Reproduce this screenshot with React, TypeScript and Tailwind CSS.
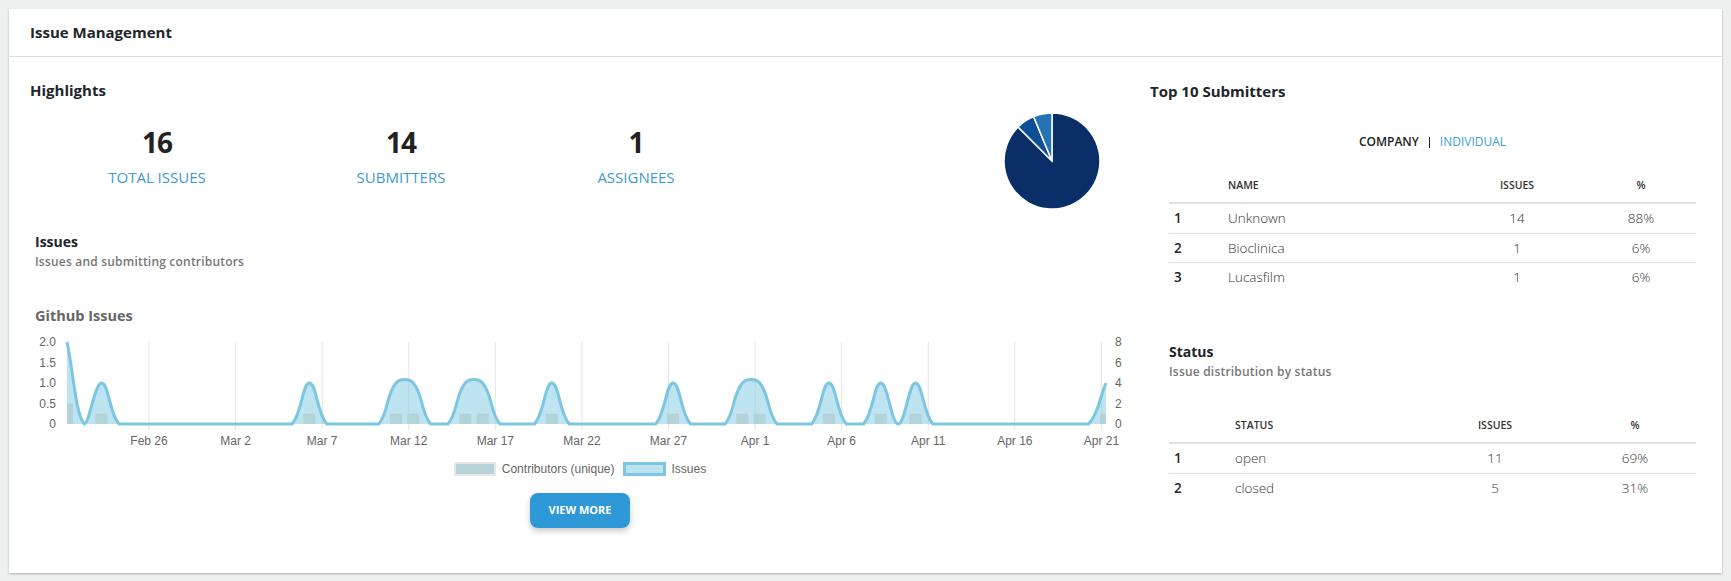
import React from 'react';

type Pt = { x: number; y: number };

const X0 = 67;
const X1 = 1106;
const BASE = 424;
const TOP = 342;
const STEP = (X1 - X0) / 60;

// issues per day (day 0 = first point of the range)
const issuesByDay: Record<number, number> = {
  0: 2, 2: 1, 14: 1, 19: 1, 20: 1, 23: 1, 24: 1, 28: 1, 35: 1, 39: 1, 40: 1, 44: 1, 47: 1, 49: 1, 60: 1,
};
const contributorsByDay: Record<number, number> = {
  0: 2, 2: 1, 14: 1, 19: 1, 20: 1, 23: 1, 24: 1, 28: 1, 35: 1, 39: 1, 40: 1, 44: 1, 47: 1, 49: 1, 60: 1,
};

const xTicks = ['Feb 26', 'Mar 2', 'Mar 7', 'Mar 12', 'Mar 17', 'Mar 22', 'Mar 27', 'Apr 1', 'Apr 6', 'Apr 11', 'Apr 16', 'Apr 21'];

const clamp = (v: number, lo: number, hi: number) => Math.min(hi, Math.max(lo, v));

// same maths as chart.js splineCurve, tension 0.4, capped to the chart area
function controlPoints(prev: Pt, cur: Pt, next: Pt, t = 0.4) {
  const d01 = Math.hypot(cur.x - prev.x, cur.y - prev.y);
  const d12 = Math.hypot(next.x - cur.x, next.y - cur.y);
  const sum = d01 + d12 || 1;
  const fa = t * (d01 / sum);
  const fb = t * (d12 / sum);
  const p = { x: cur.x - fa * (next.x - prev.x), y: cur.y - fa * (next.y - prev.y) };
  const n = { x: cur.x + fb * (next.x - prev.x), y: cur.y + fb * (next.y - prev.y) };
  return {
    p: { x: clamp(p.x, X0, X1), y: clamp(p.y, TOP, BASE) },
    n: { x: clamp(n.x, X0, X1), y: clamp(n.y, TOP, BASE) },
  };
}

function IssuesChart() {
  const pts: Pt[] = Array.from({ length: 61 }, (_, i) => ({
    x: X0 + i * STEP,
    y: BASE - (issuesByDay[i] ?? 0) * 41,
  }));
  const cps = pts.map((pt, i) => controlPoints(pts[i - 1] ?? pt, pt, pts[i + 1] ?? pt));

  let line = `M${pts[0].x} ${pts[0].y}`;
  for (let i = 1; i < pts.length; i++) {
    const a = cps[i - 1].n;
    const b = cps[i].p;
    line += ` C${a.x.toFixed(2)} ${a.y.toFixed(2)} ${b.x.toFixed(2)} ${b.y.toFixed(2)} ${pts[i].x.toFixed(2)} ${pts[i].y}`;
  }
  const area = `${line} L${X1} ${BASE} L${X0} ${BASE} Z`;

  const tickX = (k: number) => X0 + (4.735 + 5 * k) * STEP;
  const font = "'Liberation Sans', Arial, sans-serif";

  return (
    <svg width={1090} height={122} viewBox="35 330 1090 122" className="block">
      <defs>
        <clipPath id="plot">
          <rect x={X0} y={TOP - 2} width={X1 - X0} height={BASE - TOP + 2} />
        </clipPath>
      </defs>

      {xTicks.map((label, k) => (
        <g key={label}>
          <line x1={tickX(k)} x2={tickX(k)} y1={TOP} y2={BASE + 6} stroke="#e4e4e4" strokeWidth={1} />
          <text x={tickX(k)} y={445} textAnchor="middle" fontSize={12} fill="#666" fontFamily={font}>
            {label}
          </text>
        </g>
      ))}

      {['2.0', '1.5', '1.0', '0.5', '0'].map((v, k) => (
        <text key={v} x={56} y={TOP + k * 20.5 + 4} textAnchor="end" fontSize={12} fill="#666" fontFamily={font}>
          {v}
        </text>
      ))}
      {['8', '6', '4', '2', '0'].map((v, k) => (
        <text key={v} x={1115} y={TOP + k * 20.5 + 4} fontSize={12} fill="#666" fontFamily={font}>
          {v}
        </text>
      ))}

      <g clipPath="url(#plot)">
        <path d={area} fill="rgba(126,200,227,0.5)" />
        {Object.entries(contributorsByDay).map(([day, v]) => {
          const cx = X0 + Number(day) * STEP;
          const h = v * 10.25;
          return <rect key={day} x={cx - 6} y={BASE - h} width={12} height={h} fill="#b3d0d6" opacity={0.9} />;
        })}
      </g>
      <path d={line} fill="none" stroke="#7cc6e1" strokeWidth={3} strokeLinejoin="round" />
    </svg>
  );
}

function slice(a0: number, a1: number, r = 48, c = 50) {
  const p = (a: number) => [c + r * Math.sin((a * Math.PI) / 180), c - r * Math.cos((a * Math.PI) / 180)];
  const [x0, y0] = p(a0);
  const [x1, y1] = p(a1);
  return `M${c} ${c} L${x0} ${y0} A${r} ${r} 0 ${a1 - a0 > 180 ? 1 : 0} 1 ${x1} ${y1} Z`;
}

function Pie() {
  return (
    <svg width={100} height={100} viewBox="0 0 100 100" className="block">
      <path d={slice(0, 315)} fill="#0a2f68" stroke="#fff" strokeWidth={1.5} />
      <path d={slice(315, 337.5)} fill="#0d4e95" stroke="#fff" strokeWidth={1.5} />
      <path d={slice(337.5, 360)} fill="#2572b5" stroke="#fff" strokeWidth={1.5} />
    </svg>
  );
}

const stats = [
  { value: '16', label: 'TOTAL ISSUES' },
  { value: '14', label: 'SUBMITTERS' },
  { value: '1', label: 'ASSIGNEES' },
];

const submitters = [
  { name: 'Unknown', issues: 14, pct: '88%' },
  { name: 'Bioclinica', issues: 1, pct: '6%' },
  { name: 'Lucasfilm', issues: 1, pct: '6%' },
];

const statuses = [
  { name: 'open', issues: 11, pct: '69%' },
  { name: 'closed', issues: 5, pct: '31%' },
];

export default function App() {
  return (
    <div className="min-h-screen bg-[#eff0f0] px-[9px] pt-[9px] font-['Open_Sans',sans-serif] text-[#212529]">
      <div className="bg-white shadow-[0_1px_2px_rgba(0,0,0,0.28)]">
        <div className="flex h-[48px] items-center border-b border-[#dcdfe1] px-[21px] text-[15px] font-bold">
          Issue Management
        </div>

        <div className="flex">
          {/* left: highlights + chart */}
          <div className="w-[1131px]">
            <div className="flex items-start">
              <div className="flex-1 pl-[21px] pt-[23px]">
                <div className="h-[20px] text-[15px] font-bold leading-[20px]">Highlights</div>
                <div className="mt-[25px] ml-[5px] grid grid-cols-[244px_244px_226px]">
                  {stats.map((s) => (
                    <div key={s.label} className="flex flex-col items-center">
                      <div className="h-[34px] text-[28px] font-bold leading-[34px] tracking-[-1px] text-[#222]">{s.value}</div>
                      <div className="mt-[8px] h-[20px] text-[15px] leading-[20px] text-[#3a9ad3]">{s.label}</div>
                    </div>
                  ))}
                </div>
              </div>
              <div className="mt-[54px] mr-[38px]">
                <Pie />
              </div>
            </div>

            <div className="pl-[26px] pb-[45px]">
              <div className="mt-[21px] h-[20px] text-[14px] font-bold leading-[20px]">Issues</div>
              <div className="mt-[2px] h-[16px] text-[12px] font-semibold leading-[16px] tracking-[0.2px] text-[#777]">
                Issues and submitting contributors
              </div>
              <div className="mt-[36px] h-[20px] text-[14.5px] font-bold leading-[20px] text-[#666]">Github Issues</div>
              <div className="mt-[4px]">
                <IssuesChart />
              </div>
              <div className="mt-[10px] flex h-[14px] w-[1090px] items-center justify-center gap-[6px] font-['Liberation_Sans',Arial,sans-serif] text-[12px] leading-[14px] text-[#666]">
                <span className="h-[14px] w-[42px] border-2 border-[#e8e8e8] bg-[#b5d3d9]" />
                <span className="mr-[2px]">Contributors (unique)</span>
                <span className="h-[14px] w-[43px] border-[3px] border-[#7cc6e1] bg-[#bde3f0]" />
                <span>Issues</span>
              </div>
              <div className="mt-[17px] flex w-[1090px] justify-center">
                <button className="h-[35px] w-[100px] rounded-lg bg-[#2f98d7] text-[11px] font-bold text-white shadow-[0_3px_6px_rgba(0,0,0,0.22)]">
                  VIEW MORE
                </button>
              </div>
            </div>
          </div>

          {/* right: submitters + status */}
          <div className="w-[582px] pt-[24px]">
            <div className="h-[20px] pl-[10px] text-[15px] font-bold leading-[20px]">Top 10 Submitters</div>
            <div className="ml-[29px] w-[527px]">
              <div className="mt-[33px] flex h-[16px] items-center justify-center text-[12px] leading-[16px]">
                <span className="font-semibold text-[#222]">COMPANY</span>
                <span className="mx-[10px] h-[11px] w-px bg-[#222]" />
                <span className="text-[#3aa0d8]">INDIVIDUAL</span>
              </div>

              <div className="mt-[19px] grid h-[35px] grid-cols-[59px_220px_138px_110px] items-center border-b-2 border-[#dee2e6] text-[10.5px] font-semibold text-[#333]">
                <span />
                <span>NAME</span>
                <span className="text-center">ISSUES</span>
                <span className="text-center">%</span>
              </div>
              {submitters.map((r, i) => (
                <div
                  key={r.name}
                  className={`grid h-[29px] grid-cols-[59px_220px_138px_110px] items-center text-[13.5px] ${i > 0 ? 'border-t border-[#dee2e6]' : ''}`}
                >
                  <span className="pl-[5px] font-semibold">{i + 1}</span>
                  <span className="font-light text-[#333]">{r.name}</span>
                  <span className="text-center font-light text-[#333]">{r.issues}</span>
                  <span className="text-center font-light text-[#333]">{r.pct}</span>
                </div>
              ))}

              <div className="mt-[51px] h-[20px] text-[14px] font-bold leading-[20px]">Status</div>
              <div className="mt-[2px] h-[16px] text-[12px] font-semibold leading-[16px] tracking-[0.2px] text-[#777]">
                Issue distribution by status
              </div>

              <div className="mt-[29px] grid h-[35px] grid-cols-[66px_181px_158px_122px] items-center border-b-2 border-[#dee2e6] text-[10.5px] font-semibold text-[#333]">
                <span />
                <span>STATUS</span>
                <span className="text-center">ISSUES</span>
                <span className="text-center">%</span>
              </div>
              {statuses.map((r, i) => (
                <div
                  key={r.name}
                  className={`grid h-[29px] grid-cols-[66px_181px_158px_122px] items-center text-[13.5px] ${i > 0 ? 'border-t border-[#dee2e6]' : ''}`}
                >
                  <span className="pl-[5px] font-semibold">{i + 1}</span>
                  <span className="font-light text-[#333]">{r.name}</span>
                  <span className="text-center font-light text-[#333]">{r.issues}</span>
                  <span className="text-center font-light text-[#333]">{r.pct}</span>
                </div>
              ))}
            </div>
          </div>
        </div>
      </div>
    </div>
  );
}
